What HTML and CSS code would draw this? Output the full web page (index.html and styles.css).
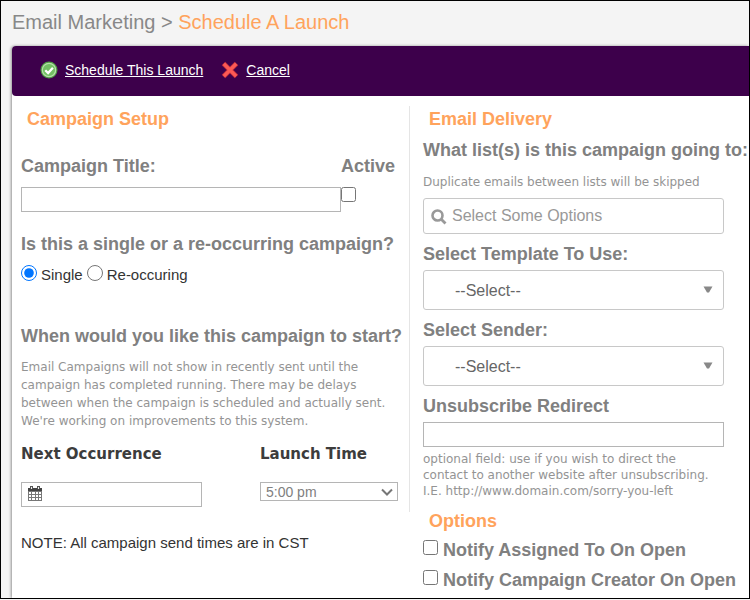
FILE: index.html
```html
<!DOCTYPE html>
<html lang="en">
<head>
    <meta charset="UTF-8">
    <meta name="viewport" content="width=device-width, initial-scale=1.0">
    <title>Schedule A Launch</title>
    <link rel="stylesheet" href="styles.css">
</head>
<body>
    <h1 class="breadcrumb">Email Marketing &gt; <span>Schedule A Launch</span></h1>
    <div class="panel">
        <div class="toolbar">
            <a href="#">
                <svg width="18" height="18" viewBox="0 0 18 18">
                    <circle cx="9" cy="9" r="8.5" fill="#4f9a45"/>
                    <circle cx="9" cy="9" r="6.7" fill="#72bf63" stroke="#b5dfa9" stroke-width="1.2"/>
                    <path d="M5.3 9.2l2.8 2.8 4.8-5.3" fill="none" stroke="#fff" stroke-width="2.3"/>
                </svg>
                <span>Schedule This Launch</span>
            </a>
            <a href="#">
                <svg width="18" height="18" viewBox="0 0 18 18">
                    <path d="M2.5 2.5l13 13M15.5 2.5l-13 13" stroke="#b8283c" stroke-width="5"/>
                    <path d="M2.8 2.8l12.4 12.4M15.2 2.8l-12.4 12.4" stroke="#fb5a55" stroke-width="3.4"/>
                </svg>
                <span>Cancel</span>
            </a>
        </div>

        <form class="columns">
            <div>
                <div class="setup">
                    <h2>Campaign Setup</h2>
                    <div class="title-row">
                        <div class="title-field">
                            <label class="field" for="title">Campaign Title:</label>
                            <input type="text" class="box" id="title">
                        </div>
                        <div class="active-field">
                            <label class="field" for="active">Active</label>
                            <input type="checkbox" class="check" id="active">
                        </div>
                    </div>

                    <div class="field question">Is this a single or a re-occurring campaign?</div>
                    <div class="radios">
                        <input type="radio" name="type" id="single" checked><label for="single">Single</label>
                        <input type="radio" name="type" id="reoccuring"><label for="reoccuring">Re-occuring</label>
                    </div>

                    <div class="field start">When would you like this campaign to start?</div>
                    <p class="hint start-hint">Email Campaigns will not show in recently sent until the<br>
                        campaign has completed running. There may be delays<br>
                        between when the campaign is scheduled and actually sent.<br>
                        We're working on improvements to this system.</p>

                    <div class="when">
                        <div class="date">
                            <label for="date">Next Occurrence</label>
                            <div class="with-icon">
                                <input type="text" class="box" id="date">
                                <svg class="calendar" width="14" height="15" viewBox="0 0 14 15">
                                    <path d="M0 2h14v13H0z" fill="#777"/>
                                    <path d="M0 2h14v3H0z" fill="#444"/>
                                    <path d="M1 6h2v2H1zM4 6h3v2H4zM8 6h2v2H8zM11 6h2v2h-2zM1 9h2v2H1zM4 9h3v2H4zM8 9h2v2H8zM11 9h2v2h-2zM1 12h2v2H1zM4 12h3v2H4zM8 12h2v2H8zM11 12h2v2h-2z" fill="#fff"/>
                                    <path d="M2 0h3v3H2zM9 0h3v3H9z" fill="#555"/>
                                    <path d="M3 1h1v2H3zM10 1h1v2h-1z" fill="#eee"/>
                                </svg>
                            </div>
                        </div>
                        <div class="time">
                            <label for="time">Launch Time</label>
                            <div class="with-icon">
                                <select id="time"><option>5:00 pm</option></select>
                                <svg class="chevron" width="12" height="8" viewBox="0 0 12 8">
                                    <path d="M1 1.5l5 5 5-5" fill="none" stroke="#767676" stroke-width="2"/>
                                </svg>
                            </div>
                        </div>
                    </div>
                </div>
                <p class="note">NOTE: All campaign send times are in CST</p>
            </div>

            <div class="delivery">
                <h2>Email Delivery</h2>
                <label class="field lists" for="lists">What list(s) is this campaign going to:</label>
                <p class="hint lists-hint">Duplicate emails between lists will be skipped</p>
                <div class="with-icon control">
                    <input type="text" class="search" id="lists" placeholder="Select Some Options">
                    <svg class="magnifier" width="16" height="16" viewBox="0 0 16 16">
                        <circle cx="6.5" cy="6.5" r="5" fill="none" stroke="#999" stroke-width="2.6"/>
                        <path d="M10 10l4.5 4.5" stroke="#999" stroke-width="2.8"/>
                    </svg>
                </div>

                <label class="field" for="template">Select Template To Use:</label>
                <div class="with-icon control">
                    <select class="big-select" id="template"><option>--Select--</option></select>
                    <svg class="triangle" width="10" height="7" viewBox="0 0 10 7"><path d="M.5.5h9L6 6.5H4z" fill="#888"/></svg>
                </div>

                <label class="field" for="sender">Select Sender:</label>
                <div class="with-icon control">
                    <select class="big-select" id="sender"><option>--Select--</option></select>
                    <svg class="triangle" width="10" height="7" viewBox="0 0 10 7"><path d="M.5.5h9L6 6.5H4z" fill="#888"/></svg>
                </div>

                <label class="field" for="redirect">Unsubscribe Redirect</label>
                <div class="control"><input type="text" class="box" id="redirect"></div>
                <p class="hint redirect-hint">optional field: use if you wish to direct the<br>
                    contact to another website after unsubscribing.<br>
                    I.E. http://www.domain.com/sorry-you-left</p>

                <h2 class="options">Options</h2>
                <div class="option">
                    <input type="checkbox" class="check" id="assigned">
                    <label for="assigned">Notify Assigned To On Open</label>
                </div>
                <div class="option">
                    <input type="checkbox" class="check" id="creator">
                    <label for="creator">Notify Campaign Creator On Open</label>
                </div>
            </div>
        </form>
    </div>
</body>
</html>
```
FILE: styles.css
```css
*{
    margin: 0;
    padding: 0;
    box-sizing: border-box;
}

body{
    display: flex;
    flex-direction: column;
    min-height: calc(100vh - 1px);
    border: 1px solid #000;
    background: #f4f4f4;
    color: #333;
    font-family: "Liberation Sans", Arial, sans-serif;
    font-size: 15px;
    line-height: 20px;
}
.breadcrumb{
    padding: 8px 11px 11px;
    font-size: 20px;
    font-weight: normal;
    line-height: 26px;
    color: #888;
}
.breadcrumb span{
    color: #ffa35c;
}
.panel{
    flex: 1;
    margin-left: 11px;
    background: #fff;
    border-radius: 4px 0 0 0;
    box-shadow: -1px 0 3px rgba(0, 0, 0, 0.4);
}
.toolbar{
    display: flex;
    align-items: center;
    gap: 18px;
    height: 50px;
    padding: 0 0 2px 28px;
    background: #3d004b;
    border-radius: 4px 0 0 4px;
}
.toolbar a{
    display: flex;
    align-items: center;
    gap: 7px;
    color: #fff;
    font-size: 14px;
}
.columns{
    display: grid;
    grid-template-columns: minmax(0, 54fr) minmax(0, 46fr);
    padding-top: 10px;
}
h2{
    padding-left: 6px;
    font-size: 18px;
    line-height: 26px;
    color: #ffa35c;
}
.field{
    display: block;
    font-size: 18px;
    font-weight: bold;
    line-height: 24px;
    color: #808080;
    white-space: nowrap;
}
.hint{
    font-family: "DejaVu Sans", Verdana, sans-serif;
    font-size: 12px;
    line-height: 16px;
    color: #949494;
    white-space: nowrap;
}
.box{
    display: block;
    width: 100%;
    height: 25px;
    padding: 0 6px;
    border: 1px solid #b5b5b5;
    background: #fff;
}
.check{
    display: block;
    width: 15px;
    height: 15px;
}
.with-icon{
    position: relative;
}
.with-icon svg{
    position: absolute;
    pointer-events: none;
}

/* left column */
.setup{
    padding: 0 11px 5px 9px;
    border-right: 1px solid #e5e5e5;
}
.title-row{
    display: flex;
    margin-top: 22px;
}
.title-field{
    flex: 1;
}
.title-row .box, .title-row .check{
    margin-top: 9px;
}
.active-field{
    width: 57px;
}
.question{
    margin-top: 20px;
}
.radios{
    display: flex;
    align-items: center;
    margin-top: 9px;
}
.radios input{
    width: 16px;
    height: 16px;
    margin: 0 4px 4px 0;
}
.radios label{
    margin-right: 4px;
}
.start{
    margin-top: 39px;
}
.start-hint{
    margin-top: 10px;
    line-height: 18px;
}
.when{
    display: flex;
    justify-content: space-between;
    margin-top: 14px;
}
.when label{
    display: block;
    margin-bottom: 18px;
    font-family: "DejaVu Sans", "Arial Black", sans-serif;
    font-size: 15px;
    font-weight: bold;
    color: #3c3c3c;
}
.date{
    width: 48%;
}
.time{
    width: 138px;
}
.calendar{
    left: 7px;
    top: 4px;
}
.time select{
    display: block;
    appearance: none;
    width: 100%;
    height: 19px;
    padding-left: 5px;
    border: 1px solid #b5b5b5;
    background: #fff;
    color: #808080;
    font-family: inherit;
    font-size: 14px;
}
.chevron{
    right: 5px;
    top: 6px;
}
.note{
    margin: 21px 0 0 9px;
}

/* right column */
.delivery{
    padding-left: 13px;
    white-space: nowrap;
}
.control{
    margin: 4px 25px 8px 0;
}
.lists{
    margin-top: 6px;
}
.lists-hint{
    margin: 12px 0 8px;
}
.search{
    display: block;
    width: 100%;
    height: 36px;
    padding-left: 28px;
    border: 1px solid #c8c8c8;
    border-radius: 3px;
    font-family: inherit;
    font-size: 16px;
}
.search::placeholder{
    color: #999;
}
.magnifier{
    left: 8px;
    top: 11px;
}
.big-select{
    display: block;
    appearance: none;
    width: 100%;
    height: 40px;
    padding-left: 31px;
    border: 1px solid #c8c8c8;
    border-radius: 3px;
    background: #fff;
    color: #666;
    font-family: inherit;
    font-size: 16px;
}
.triangle{
    right: 11px;
    top: 16px;
}
.redirect-hint{
    margin-top: -4px;
}
.options{
    margin: 9px 0 4px;
}
.option{
    display: flex;
    gap: 5px;
    margin-bottom: 6px;
    font-size: 18px;
    font-weight: bold;
    line-height: 24px;
    color: #808080;
}
.option .check{
    margin-top: 2px;
}
```
